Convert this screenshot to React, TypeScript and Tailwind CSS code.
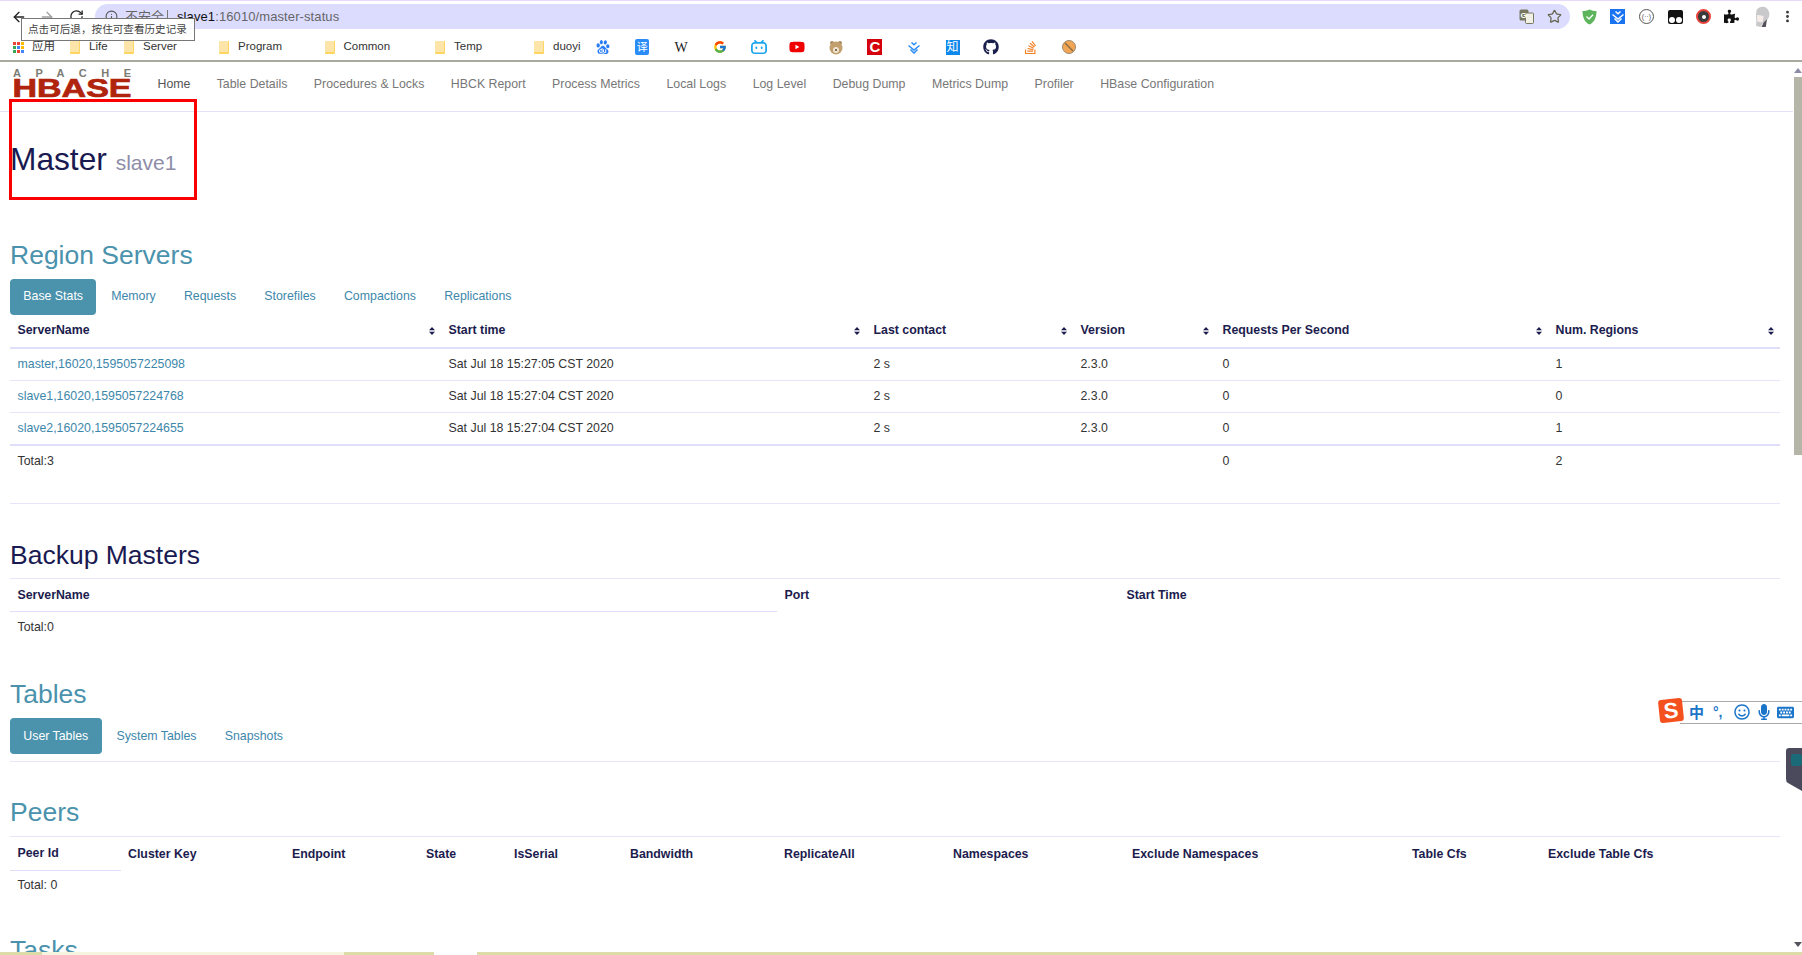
import React from 'react';
import { ArrowLeft, ArrowRight, RotateCw, Info, Star, EllipsisVertical } from 'lucide-react';
import { FaGithub, FaStackOverflow, FaYoutube, FaPuzzlePiece, FaRegSmile, FaMicrophone, FaKeyboard } from 'react-icons/fa';
import { FcGoogle } from 'react-icons/fc';
import { SiBaidu, SiBilibili } from 'react-icons/si';

const navItems = ['Table Details', 'Procedures & Locks', 'HBCK Report', 'Process Metrics', 'Local Logs', 'Log Level', 'Debug Dump', 'Metrics Dump', 'Profiler', 'HBase Configuration'];

const folders = [
  { label: 'Life', width: 'w-[54px]' },
  { label: 'Server', width: 'w-[95px]' },
  { label: 'Program', width: 'w-[105.5px]' },
  { label: 'Common', width: 'w-[110.5px]' },
  { label: 'Temp', width: 'w-[99px]' },
  { label: 'duoyi', width: 'w-[50px]' },
];

const servers = [
  { name: 'master,16020,1595057225098', start: 'Sat Jul 18 15:27:05 CST 2020', regions: '1' },
  { name: 'slave1,16020,1595057224768', start: 'Sat Jul 18 15:27:04 CST 2020', regions: '0' },
  { name: 'slave2,16020,1595057224655', start: 'Sat Jul 18 15:27:04 CST 2020', regions: '1' },
];

const SortIcon = () => (
  <svg width="6" height="8" viewBox="0 0 6 8" className="shrink-0 mr-[-1px]">
    <path d="M3 0 L6 3.2 H0 Z M3 8 L0 4.8 H6 Z" fill="#1c1c4e" />
  </svg>
);

const Chevrons = ({ color }: { color: string }) => (
  <svg width="14" height="13" viewBox="0 0 14 13" fill="none" stroke={color} strokeWidth="1.5">
    <path d="M4.5 1.5 L7 3.8 L9.5 1.5" />
    <path d="M1.5 4.5 L7 9 L12.5 4.5" />
    <path d="M3.5 8.5 L7 12 L10.5 8.5" />
  </svg>
);

const Folder = () => <div className="w-[10px] h-[13px] mr-[9px] shrink-0 bg-[#fde4a8] rounded-[1px] border-b-2 border-r border-[#fcd65e]" />;

const AppsGrid = () => (
  <div className="grid grid-cols-3 gap-[1px] w-[11px] shrink-0 mr-2">
    <div className="h-[3px] bg-[#ea4335]" />
    <div className="h-[3px] bg-[#ea4335]" />
    <div className="h-[3px] bg-[#fbbc04]" />
    <div className="h-[3px] bg-[#34a853]" />
    <div className="h-[3px] bg-[#4285f4]" />
    <div className="h-[3px] bg-[#fbbc04]" />
    <div className="h-[3px] bg-[#34a853]" />
    <div className="h-[3px] bg-[#ea4335]" />
    <div className="h-[3px] bg-[#4285f4]" />
  </div>
);

const bookmarkIcons = [
  <SiBaidu key="baidu" size={14} color="#2a7df5" />,
  <div key="yi" className="w-[14px] h-[16px] rounded-[2px] bg-[#2a8cf7] text-white text-[11px] leading-[16px] text-center">译</div>,
  <span key="w" className="font-['Liberation_Serif',serif] text-[14px] text-[#222]">W</span>,
  <FcGoogle key="g" size={14} />,
  <SiBilibili key="bili" size={16} color="#1ea5ef" />,
  <FaYoutube key="yt" size={16} color="#f00000" />,
  <svg key="bear" width="14" height="15" viewBox="0 0 14 15">
    <circle cx="3" cy="3" r="2" fill="#a8895e" />
    <circle cx="11" cy="3" r="2" fill="#a8895e" />
    <circle cx="7" cy="8" r="6.5" fill="#c2a06e" />
    <circle cx="7" cy="10" r="3" fill="#f1e6d2" />
    <circle cx="7" cy="10" r="1" fill="#5a4630" />
  </svg>,
  <div key="c" className="w-[15px] h-[16px] bg-[#d4000c] text-white font-bold text-[15px] leading-[16px] text-center">C</div>,
  <Chevrons key="down" color="#2a8cf7" />,
  <div key="zhi" className="w-[14px] h-[15px] bg-[#0f88eb] text-white text-[12px] leading-[15px] text-center">知</div>,
  <FaGithub key="gh" size={16} color="#1b1f4b" />,
  <FaStackOverflow key="so" size={15} color="#f48024" />,
  <svg key="no" width="14" height="14" viewBox="0 0 14 14">
    <circle cx="7" cy="7" r="6.5" fill="#f2a555" stroke="#9a8a70" />
    <path d="M3 3 L11 11" stroke="#8a6a40" strokeWidth="1.5" />
  </svg>,
];

const BrowserChrome = () => (
  <header className="h-[62px] shrink-0 border-b-2 border-[#a9a99f] bg-white">
    <div className="h-[1px] bg-[#e8d8fb]" />
    <div className="flex items-center h-[25px] mt-[3px]">
      <div className="flex items-center w-[95px] shrink-0 pl-[11px]">
        <ArrowLeft size={16} color="#222" strokeWidth={2} />
        <ArrowRight size={16} color="#a0a0a0" strokeWidth={2} className="ml-[12px]" />
        <RotateCw size={15} color="#222" strokeWidth={2} className="ml-[14px]" />
      </div>
      <div className="flex items-center flex-1 h-full bg-[#dcdcff] rounded-full pl-[10px] pr-[8.5px] text-[13px]">
        <Info size={13} color="#555" />
        <span className="ml-[7px] text-[#666] text-[13px] w-[42px]">不安全</span>
        <span className="w-[1px] h-[14px] bg-[#777]" />
        <span className="ml-[9px] text-[#111] tracking-[0.1px]">slave1</span>
        <span className="text-[#666] tracking-[0.1px]">:16010/master-status</span>
        <svg width="15" height="15" viewBox="0 0 15 15" className="ml-auto">
          <rect x="0.5" y="0.5" width="9" height="11" rx="1.5" fill="#77775f" />
          <rect x="6.5" y="4" width="8" height="10.5" rx="1" fill="#f0f0e6" stroke="#77775f" />
          <text x="1.5" y="9" fontSize="8" fill="#fff" fontWeight="700">G</text>
        </svg>
        <Star size={15} color="#666650" strokeWidth={2} className="ml-[13px]" />
      </div>
      <div className="flex items-center w-[232px] shrink-0 pl-[12px]">
        <svg width="15" height="16" viewBox="0 0 15 16">
          <path d="M7.5 0.5 C10 1.5 12 2 14.5 2 C14.5 9 12 13.5 7.5 15.5 C3 13.5 0.5 9 0.5 2 C3 2 5 1.5 7.5 0.5 Z" fill="#5cb55a" />
          <path d="M4.5 7.5 L7 10 L11 5.8" stroke="#fff" strokeWidth="1.4" fill="none" />
        </svg>
        <div className="ml-[13px] w-[15px] h-[15px] bg-[#1a73f0] flex items-center justify-center">
          <Chevrons color="#ffffff" />
        </div>
        <div className="ml-[14px] w-[15px] h-[15px] rounded-full border border-[#555] text-[7px] leading-[13px] text-center text-[#555]">(··)</div>
        <div className="ml-[13.5px] w-[15px] h-[14px] bg-[#111] rounded-[2px] relative">
          <div className="absolute left-[1px] bottom-[1px] w-[6px] h-[6px] rounded-full bg-white" />
          <div className="absolute right-[1px] bottom-[1px] w-[6px] h-[6px] rounded-full bg-white" />
        </div>
        <div className="ml-[13.5px] w-[15px] h-[15px] rounded-full bg-[#3a3a3a] border-2 border-[#e8443c] flex items-center justify-center">
          <div className="w-[4px] h-[4px] bg-white rounded-full" />
        </div>
        <FaPuzzlePiece size={15} color="#111" className="ml-[13px]" />
        <svg width="18" height="22" viewBox="0 0 15 20" className="ml-[13.5px]">
          <path d="M3 3 C6 -1 13 0 14 6 C15 10 12 14 9 15 L6 19 L2 18 C3 14 1 8 3 3 Z" fill="#c9c9cc" />
          <path d="M3 8 L9 9 L8 15 L3 14 Z" fill="#f7ece8" />
          <path d="M9 15 L12 12 L11 19 L7 19 Z" fill="#55505a" />
        </svg>
        <EllipsisVertical size={15} color="#333" strokeWidth={2.5} className="ml-[9px]" />
      </div>
    </div>
    <div className="flex items-center h-[22px] mt-[7px] pl-[13px] text-[11.5px] text-[#333]">
      <div className="flex items-center w-[57px] shrink-0">
        <AppsGrid />
        <span>应用</span>
      </div>
      {folders.map((f) => (
        <div key={f.label} className={`flex items-center shrink-0 ${f.width}`}>
          <Folder />
          <span>{f.label}</span>
        </div>
      ))}
      {bookmarkIcons.map((icon, i) => (
        <div key={i} className="flex items-center justify-center w-[38.8px] shrink-0">{icon}</div>
      ))}
    </div>
  </header>
);

const Logo = () => (
  <svg width="120" height="31" viewBox="0 0 120 31" className="shrink-0 ml-[12px] mr-[12.5px] -mt-[4px] overflow-visible">
    <text x="1" y="9.5" fontFamily="Liberation Sans" fontSize="11" fontWeight="700" fill="#7c7c74" textLength="118" lengthAdjust="spacing">APACHE</text>
    <text x="0.5" y="30" fontFamily="Liberation Sans" fontSize="26.5" fontWeight="700" fill="#b0240e" stroke="#b0240e" strokeWidth="0.7" textLength="119" lengthAdjust="spacingAndGlyphs">HBASE</text>
  </svg>
);

const TopNav = () => (
  <nav className="flex items-center h-[50px] pb-[5px] border-b border-[#e2e2fa] text-[#777]">
    <Logo />
    <a className="px-[13px] text-[#555]">Home</a>
    {navItems.map((n) => (
      <a key={n} className="px-[13.25px]">{n}</a>
    ))}
  </nav>
);

const Tab = ({ label, active }: { label: string; active?: boolean }) => (
  <a className={active
    ? 'flex items-center h-[36px] px-[13.3px] mr-[1.6px] rounded-[4px] bg-[#4b92ad] text-white'
    : 'flex items-center h-[36px] px-[13.3px] mr-[1.6px] text-[#3d87ab]'}>{label}</a>
);

const H2 = ({ children, className }: { children: React.ReactNode; className: string }) => (
  <h2 className={`text-[26.5px] leading-[29px] h-[29px] font-normal ${className}`}>{children}</h2>
);

const SortTh = ({ label }: { label: string }) => (
  <th className="px-[7.5px] font-bold text-left">
    <div className="flex items-center justify-between">
      {label}
      <SortIcon />
    </div>
  </th>
);

const RegionServers = () => (
  <table className="w-full table-fixed">
    <colgroup>
      <col className="w-[431px]" />
      <col className="w-[425px]" />
      <col className="w-[207px]" />
      <col className="w-[142px]" />
      <col className="w-[333px]" />
      <col />
    </colgroup>
    <thead>
      <tr className="h-[33px] border-b-2 border-[#dfdffb] text-[#1c1c4e]">
        {['ServerName', 'Start time', 'Last contact', 'Version', 'Requests Per Second', 'Num. Regions'].map((h) => (
          <SortTh key={h} label={h} />
        ))}
      </tr>
    </thead>
    <tbody>
      {servers.map((s, i) => (
        <tr key={s.name} className={i === 2 ? 'h-[32.4px] border-b-2 border-[#dfdffb]' : 'h-[32.4px] border-b border-[#e6e6fa]'}>
          <td className="px-[7.5px]"><a className="text-[#3d87ab]">{s.name}</a></td>
          <td className="px-[7.5px]">{s.start}</td>
          <td className="px-[7.5px]">2 s</td>
          <td className="px-[7.5px]">2.3.0</td>
          <td className="px-[7.5px]">0</td>
          <td className="px-[7.5px]">{s.regions}</td>
        </tr>
      ))}
      <tr className="h-[32.6px]">
        <td className="px-[7.5px]">Total:3</td>
        <td />
        <td />
        <td />
        <td className="px-[7.5px]">0</td>
        <td className="px-[7.5px]">2</td>
      </tr>
    </tbody>
  </table>
);

const BackupMasters = () => (
  <table className="w-full table-fixed">
    <colgroup>
      <col className="w-[767px]" />
      <col className="w-[342px]" />
      <col />
    </colgroup>
    <thead>
      <tr className="h-[33px] text-[#1c1c4e]">
        <th className="px-[7.5px] text-left font-bold border-b border-[#dfdffb]">ServerName</th>
        <th className="px-[7.5px] text-left font-bold">Port</th>
        <th className="px-[7.5px] text-left font-bold">Start Time</th>
      </tr>
    </thead>
    <tbody>
      <tr className="h-[30px]">
        <td className="px-[7.5px]">Total:0</td>
      </tr>
    </tbody>
  </table>
);

const peerCols = ['Cluster Key', 'Endpoint', 'State', 'IsSerial', 'Bandwidth', 'ReplicateAll', 'Namespaces', 'Exclude Namespaces', 'Table Cfs', 'Exclude Table Cfs'];

const Peers = () => (
  <table className="w-full table-fixed">
    <colgroup>
      <col className="w-[110.5px]" />
      <col className="w-[164px]" />
      <col className="w-[134px]" />
      <col className="w-[88px]" />
      <col className="w-[116px]" />
      <col className="w-[154px]" />
      <col className="w-[169px]" />
      <col className="w-[179px]" />
      <col className="w-[280px]" />
      <col className="w-[136px]" />
      <col />
    </colgroup>
    <thead>
      <tr className="h-[33px] text-[#1c1c4e]">
        <th className="px-[7.5px] text-left font-bold border-b border-[#dfdffb]">Peer Id</th>
        {peerCols.map((c) => (
          <th key={c} className="px-[7.5px] text-left font-bold">{c}</th>
        ))}
      </tr>
    </thead>
    <tbody>
      <tr className="h-[30px]">
        <td className="px-[7.5px]">Total: 0</td>
      </tr>
    </tbody>
  </table>
);

const PageBody = () => (
  <main className="flex-1 h-full overflow-hidden pl-[10px] pr-[13px] text-[12.35px] text-[#333]">
    <div className="-ml-[10px] -mr-[13px]">
      <TopNav />
    </div>
    <h1 className="mt-[29.5px] h-[35px] text-[31.7px] leading-[35px] font-normal text-[#1a1a52]">
      Master <small className="text-[21px] text-[#8d8da8]">slave1</small>
    </h1>
    <H2 className="mt-[64px] text-[#4b92ad]">Region Servers</H2>
    <div className="flex mt-[9.2px]">
      <Tab label="Base Stats" active />
      <Tab label="Memory" />
      <Tab label="Requests" />
      <Tab label="Storefiles" />
      <Tab label="Compactions" />
      <Tab label="Replications" />
    </div>
    <RegionServers />
    <div className="mt-[26px] border-t border-[#e6e6fa]" />
    <div className="mt-[37px] pb-[7.5px] border-b border-[#e6e6fa]">
      <H2 className="text-[#1a1a52]">Backup Masters</H2>
    </div>
    <BackupMasters />
    <H2 className="mt-[38px] text-[#4b92ad]">Tables</H2>
    <div className="flex mt-[9.2px] pb-[6.7px] border-b border-[#e6e6fa]">
      <Tab label="User Tables" active />
      <Tab label="System Tables" />
      <Tab label="Snapshots" />
    </div>
    <div className="mt-[36px] pb-[9.5px] border-b border-[#e6e6fa]">
      <H2 className="text-[#4b92ad]">Peers</H2>
    </div>
    <Peers />
    <H2 className="mt-[36px] text-[#4b92ad]">Tasks</H2>
  </main>
);

const Scrollbar = () => (
  <div className="w-[9px] shrink-0 h-full flex flex-col items-center bg-white">
    <svg width="8" height="5" viewBox="0 0 8 5" className="mt-[6px]">
      <path d="M4 0 L8 5 H0 Z" fill="#8d8da8" />
    </svg>
    <div className="mt-[4px] h-[378px] w-[8px] self-end bg-[#b5b5a8]" />
    <svg width="8" height="5" viewBox="0 0 8 5" className="mt-auto mb-[8px]">
      <path d="M4 5 L8 0 H0 Z" fill="#55555f" />
    </svg>
  </div>
);

const BackTooltip = () => (
  <div className="absolute left-[21px] top-[18px] w-[174px] h-[23px] border border-[#777] bg-white text-[10.6px] leading-[21px] pl-[6px] text-[#444] whitespace-nowrap">
    点击可后退，按住可查看历史记录
  </div>
);

const RedBox = () => (
  <div className="absolute left-[9px] top-[99px] w-[188px] h-[101px] border-[3px] border-[#fb0000]" />
);

const ImeBar = () => (
  <div className="absolute left-[1657px] top-[697px] w-[145px] h-[27px]">
    <div className="absolute left-[23px] top-[3.5px] right-0 h-[23px] bg-white border-y border-[#aaa] flex items-center text-[#1b75c8]">
      <span className="absolute left-[9px] text-[15px] font-bold leading-none">中</span>
      <span className="absolute left-[33px] text-[14px] font-bold leading-none">°,</span>
      <FaRegSmile size={16} className="absolute left-[54px]" />
      <FaMicrophone size={16} className="absolute left-[76px]" />
      <FaKeyboard size={17} className="absolute left-[97px]" />
    </div>
    <div className="absolute left-[2px] top-[2px] w-[24px] h-[23px] bg-[#f4511e] rounded-[3px] -rotate-6 flex items-center justify-center text-white font-bold text-[22px] leading-none">S</div>
  </div>
);

const TeamViewerTab = () => (
  <svg width="16" height="43" viewBox="0 0 16 43" className="absolute left-[1786px] top-[748px]">
    <path d="M3 0 H16 V43 L2 35 Q0 34 0 31 V3 Q0 0 3 0 Z" fill="#4a4a5c" />
    <rect x="5" y="6" width="11" height="12" rx="3" fill="#1b6a78" />
  </svg>
);

const BottomStrip = () => (
  <div className="absolute left-0 right-0 bottom-0 h-[3px] flex">
    <div className="w-[42px] bg-[#dcdca8]" />
    <div className="w-[302px] bg-[#f5f5e0]" />
    <div className="w-[90px] bg-[#dcdca8]" />
    <div className="w-[43px] bg-white" />
    <div className="flex-1 bg-[#dcdca8]" />
  </div>
);

const App: React.FC = () => {
  return (
    <div className="relative flex flex-col h-[955px] w-[1802px] overflow-hidden bg-white font-['Liberation_Sans','Noto_Sans_CJK_SC',sans-serif]">
      <BrowserChrome />
      <div className="flex flex-1 min-h-0">
        <PageBody />
        <Scrollbar />
      </div>
      <BackTooltip />
      <RedBox />
      <ImeBar />
      <TeamViewerTab />
      <BottomStrip />
    </div>
  );
};

export default App;
